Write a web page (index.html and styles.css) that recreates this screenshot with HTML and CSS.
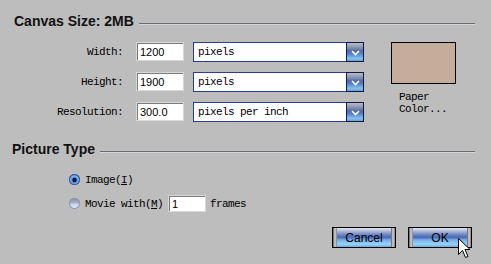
FILE: index.html
```html
<!DOCTYPE html>
<html lang="en">

<head>
    <meta charset="UTF-8">
    <title>Canvas Size</title>
    <link rel="stylesheet" href="styles.css">
</head>

<body>
    <div class="dialog">
        <div class="group-title first">
            <span>Canvas Size: 2MB</span>
            <i class="rule"></i>
        </div>

        <div class="size-body">
            <div class="fields">
                <label class="lbl">Width:</label>
                <div class="num">1200</div>
                <div class="select"><span>pixels</span><b class="drop"><svg width="9" height="6" viewBox="0 0 9 6"><polyline points="1,1 4.5,4.5 8,1" fill="none" stroke="#fff" stroke-width="1.6"/></svg></b></div>

                <label class="lbl">Height:</label>
                <div class="num">1900</div>
                <div class="select"><span>pixels</span><b class="drop"><svg width="9" height="6" viewBox="0 0 9 6"><polyline points="1,1 4.5,4.5 8,1" fill="none" stroke="#fff" stroke-width="1.6"/></svg></b></div>

                <label class="lbl">Resolution:</label>
                <div class="num">300.0</div>
                <div class="select"><span>pixels per inch</span><b class="drop"><svg width="9" height="6" viewBox="0 0 9 6"><polyline points="1,1 4.5,4.5 8,1" fill="none" stroke="#fff" stroke-width="1.6"/></svg></b></div>
            </div>

            <div class="paper">
                <div class="swatch"></div>
                <div class="paper-text">Paper<br>Color...</div>
            </div>
        </div>

        <div class="group-title second">
            <span>Picture Type</span>
            <i class="rule"></i>
        </div>

        <div class="radios">
            <div class="radio-row">
                <i class="radio on"></i>
                <span class="mono">Image(<u>I</u>)</span>
            </div>
            <div class="radio-row">
                <i class="radio"></i>
                <span class="mono">Movie with(<u>M</u>)</span>
                <div class="num small">1</div>
                <span class="mono">frames</span>
            </div>
        </div>

        <div class="buttons">
            <button class="btn">Cancel</button>
            <button class="btn">OK</button>
        </div>

        <!-- mouse pointer over OK -->
        <svg class="cursor" width="13" height="21" viewBox="0 0 13 21">
            <path d="M0.5,0.5 L0.5,16.5 L4.5,12.5 L7.5,19.5 L10,18.5 L7,11.5 L12,11.5 Z" fill="#fff" stroke="#000" stroke-width="1"/>
        </svg>
    </div>
</body>

</html>
```

FILE: styles.css
```css
* {
    padding: 0;
    margin: 0;
    box-sizing: border-box;
}

html,
body {
    width: 100%;
    height: 100%;
    background-color: #bdbdbd;
    overflow: hidden;
}

.dialog {
    position: relative;
    width: 491px;
    height: 264px;
    padding-top: 13px;
    font-family: "Liberation Mono", monospace;
    font-size: 11px;
    color: #000;
}

/* group headings with the etched rule */
.group-title {
    display: flex;
    align-items: flex-start;
    height: 16px;
    padding-right: 16px;
    font-family: "Liberation Sans", Arial, sans-serif;
    font-weight: bold;
    font-size: 14px;
    line-height: 16px;
    color: #111;
}

.group-title.first {
    padding-left: 14px;
}

.group-title.second {
    margin-top: 19px;
    padding-left: 12px;
}

.rule {
    flex: 1;
    height: 2px;
    margin-top: 10px;
    margin-left: 5px;
    border-top: 1px solid #6c6c74;
    border-bottom: 1px solid #d6d6d6;
}

.size-body {
    display: flex;
    margin-top: 13px;
}

.fields {
    display: grid;
    grid-template-columns: 136px 57px 171px;
    grid-auto-rows: 20px;
    row-gap: 10px;
}

.lbl,
.mono {
    font-family: "Liberation Mono", monospace;
    font-size: 11px;
    letter-spacing: -0.6px;
}

.lbl {
    align-self: center;
    text-align: right;
    padding-right: 13px;
}

.num {
    width: 48px;
    height: 19px;
    background: #fff;
    border: 1px solid #fff;
    box-shadow: inset 1px 1px 0 #7c7c7c;
    outline: 1px solid #d8d8d8;
    outline-offset: -1px;
    padding: 2px 0 0 3px;
    font-family: "Liberation Sans", Arial, sans-serif;
    font-size: 11px;
    line-height: 14px;
}

.num.small {
    width: 38px;
    height: 17px;
    padding-top: 1px;
    margin: 0 4px 0 5px;
}

.select {
    display: flex;
    align-items: center;
    background: #fff;
    border: 1px solid #27408e;
    font-family: "Liberation Mono", monospace;
    letter-spacing: -0.6px;
}

.select span {
    flex: 1;
    padding-left: 4px;
}

.drop {
    display: flex;
    align-items: center;
    justify-content: center;
    width: 18px;
    height: 20px;
    margin: -1px -1px -1px 0;
    border: 1px solid #0f1a44;
    background: linear-gradient(to bottom, #b8bcc6 0%, #8e98b0 22%, #4f6aa8 45%, #5a86c8 62%, #86c0ee 85%, #6aa0d8 100%);
}

.drop svg {
    margin-top: 1px;
}

.paper {
    margin-left: 27px;
}

.swatch {
    width: 65px;
    height: 42px;
    background: #c4ad9b;
    border: 1px solid #000;
}

.paper-text {
    margin-top: 7px;
    padding-left: 8px;
    line-height: 12px;
    letter-spacing: -0.6px;
}

.radios {
    display: flex;
    flex-direction: column;
    gap: 7px;
    margin-top: 14px;
    padding-left: 69px;
}

.radio-row {
    display: flex;
    align-items: center;
    height: 17px;
}

.radio {
    width: 11px;
    height: 11px;
    margin-right: 5px;
    border-radius: 50%;
    background: linear-gradient(to bottom, #8a90a4 0%, #a8b0c4 45%, #c8d4ec 55%, #e0e8f8 100%);
    box-shadow: inset 0 0 0 1px #8c94a8;
}

.radio.on {
    background: radial-gradient(circle at 50% 55%, #10183c 0 1.8px, #4a7ad0 2.3px, #8cb8f0 4px, #3a64b8 5.5px);
    box-shadow: inset 0 0 0 1px #3a5aa0;
}

.mono u {
    text-decoration: underline;
}

.buttons {
    display: flex;
    justify-content: flex-end;
    gap: 12px;
    margin-top: 15px;
    padding-right: 19px;
}

.btn {
    position: relative;
    width: 64px;
    height: 21px;
    border: 1px solid #000;
    font-family: "Liberation Sans", Arial, sans-serif;
    font-size: 12px;
    color: #000;
    background: linear-gradient(to bottom, #e4e8f0 0%, #a8b4d8 18%, #5a74b8 42%, #4e6cb4 50%, #74acea 62%, #98d4fa 85%, #70a8e0 100%);
}

.btn::before,
.btn::after {
    content: "";
    position: absolute;
    top: 0;
    bottom: 0;
    width: 4px;
    background: linear-gradient(to right, #5a5a5a, #d8d8d8 50%, #7a7a7a);
}

.btn::before {
    left: 0;
}

.btn::after {
    right: 0;
}

.cursor {
    position: absolute;
    z-index: 5;
    display: block;
    left: 458px;
    top: 238px;
}
```
